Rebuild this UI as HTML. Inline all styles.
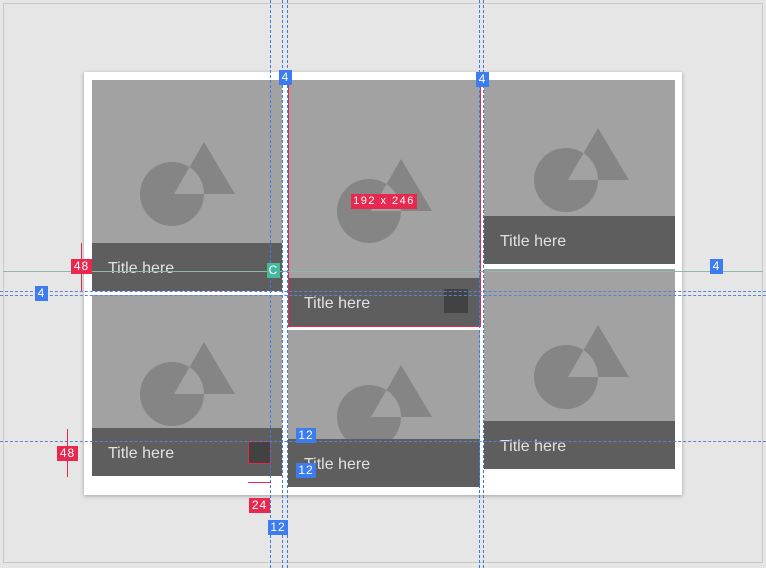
<!DOCTYPE html>
<html><head><meta charset="utf-8"><style>
*{margin:0;padding:0;box-sizing:border-box}
body{width:766px;height:568px;background:#e6e6e6;position:relative;overflow:hidden;font-family:"Liberation Sans",sans-serif}
.a{position:absolute}
.frame{left:3px;top:3px;width:760px;height:560px;border:1px solid #c9c9c9}
.card{left:84px;top:72px;width:598px;height:423px;background:#fff;box-shadow:0 1px 4px rgba(0,0,0,.3)}
.tile{position:absolute;background:#a2a2a2;overflow:hidden}
.bar{position:absolute;left:0;right:0;bottom:0;height:48px;background:#5e5e5e;color:#e2e2e2;font-size:16px;padding-left:16px;line-height:52px}
.tile svg{position:absolute}
.vd{position:absolute;width:0;border-left:1px dashed #3b7be8;top:0;height:568px}
.hd{position:absolute;height:0;border-top:1px dashed #5a84d0;left:0;width:766px}
.lb{position:absolute;color:#fff;font-size:12px;text-align:center;line-height:15px;height:15px;letter-spacing:1px}
.b{background:#3d7cf0}.r{background:#e8294f}.g{background:#45b99c}
</style></head><body>
<div class="a frame"></div>
<div class="a card"></div>

<div class="tile" style="left:92px;top:80px;width:190px;height:211px"><svg width="190" height="163"><path fill="#858585" fill-rule="evenodd" d="M48 114a32 32 0 1 0 64 0a32 32 0 1 0 -64 0ZM112 62L82 114L143 114Z"/></svg><div class="bar">Title here</div></div>
<div class="tile" style="left:92px;top:295px;width:190px;height:181px"><svg width="190" height="133" style="top:0"><path fill="#858585" fill-rule="evenodd" d="M48 99a32 32 0 1 0 64 0a32 32 0 1 0 -64 0ZM112 47L82 99L143 99Z"/></svg><div class="bar">Title here</div></div>

<div class="tile" style="left:288px;top:80px;width:192px;height:246px"><svg width="192" height="197"><path fill="#858585" fill-rule="evenodd" d="M49 131a32 32 0 1 0 64 0a32 32 0 1 0 -64 0ZM113 79L83 131L144 131Z"/></svg><div class="bar">Title here</div><div class="a" style="left:156px;top:209px;width:24px;height:24px;background:#424242"></div></div>
<div class="tile" style="left:288px;top:330px;width:192px;height:157px"><svg width="192" height="109"><path fill="#858585" fill-rule="evenodd" d="M49 87a32 32 0 1 0 64 0a32 32 0 1 0 -64 0ZM113 35L83 87L144 87Z"/></svg><div class="bar">Title here</div></div>

<div class="tile" style="left:484px;top:80px;width:191px;height:184px"><svg width="191" height="136"><path fill="#858585" fill-rule="evenodd" d="M50 100a32 32 0 1 0 64 0a32 32 0 1 0 -64 0ZM114 48L84 100L145 100Z"/></svg><div class="bar">Title here</div></div>
<div class="tile" style="left:484px;top:269px;width:191px;height:200px"><svg width="191" height="152"><path fill="#858585" fill-rule="evenodd" d="M50 108a32 32 0 1 0 64 0a32 32 0 1 0 -64 0ZM114 56L84 108L145 108Z"/></svg><div class="bar">Title here</div></div>

<div class="a" style="left:288px;top:80px;width:193px;height:247px;border:1px solid #e8294f;border-top:none"></div>
<div class="a" style="left:248px;top:441px;width:23px;height:23px;background:#424242;border:1px solid #e8294f"></div>

<div class="a" style="left:3px;top:271px;width:760px;height:1px;background:#8fb8ad"></div>
<div class="vd" style="left:270px"></div><div class="vd" style="left:282px"></div><div class="vd" style="left:287px"></div>
<div class="vd" style="left:479px"></div><div class="vd" style="left:483px"></div>
<div class="hd" style="top:291px"></div><div class="hd" style="top:295px"></div><div class="hd" style="top:441px"></div>

<div class="lb b" style="left:279px;top:70px;width:13px">4</div>
<div class="lb b" style="left:476px;top:72px;width:13px">4</div>
<div class="lb b" style="left:710px;top:259px;width:13px">4</div>
<div class="lb b" style="left:35px;top:286px;width:13px">4</div>
<div class="lb b" style="left:296px;top:428px;width:20px">12</div>
<div class="lb b" style="left:296px;top:463px;width:20px">12</div>
<div class="lb b" style="left:268px;top:520px;width:20px">12</div>
<div class="lb g" style="left:267px;top:263px;width:13px">C</div>
<div class="lb r" style="left:71px;top:259px;width:21px">48</div>
<div class="lb r" style="left:57px;top:446px;width:21px">48</div>
<div class="lb r" style="left:249px;top:498px;width:21px">24</div>
<div class="lb r" style="left:351px;top:194px;width:66px;font-size:11px;letter-spacing:1.5px">192 x 246</div>
<div class="a" style="left:81px;top:243px;width:1px;height:48px;background:#e8294f"></div>
<div class="a" style="left:67px;top:429px;width:1px;height:48px;background:#e8294f"></div>
<div class="a" style="left:248px;top:482px;width:23px;height:1px;background:#e8294f"></div>
</body></html>
